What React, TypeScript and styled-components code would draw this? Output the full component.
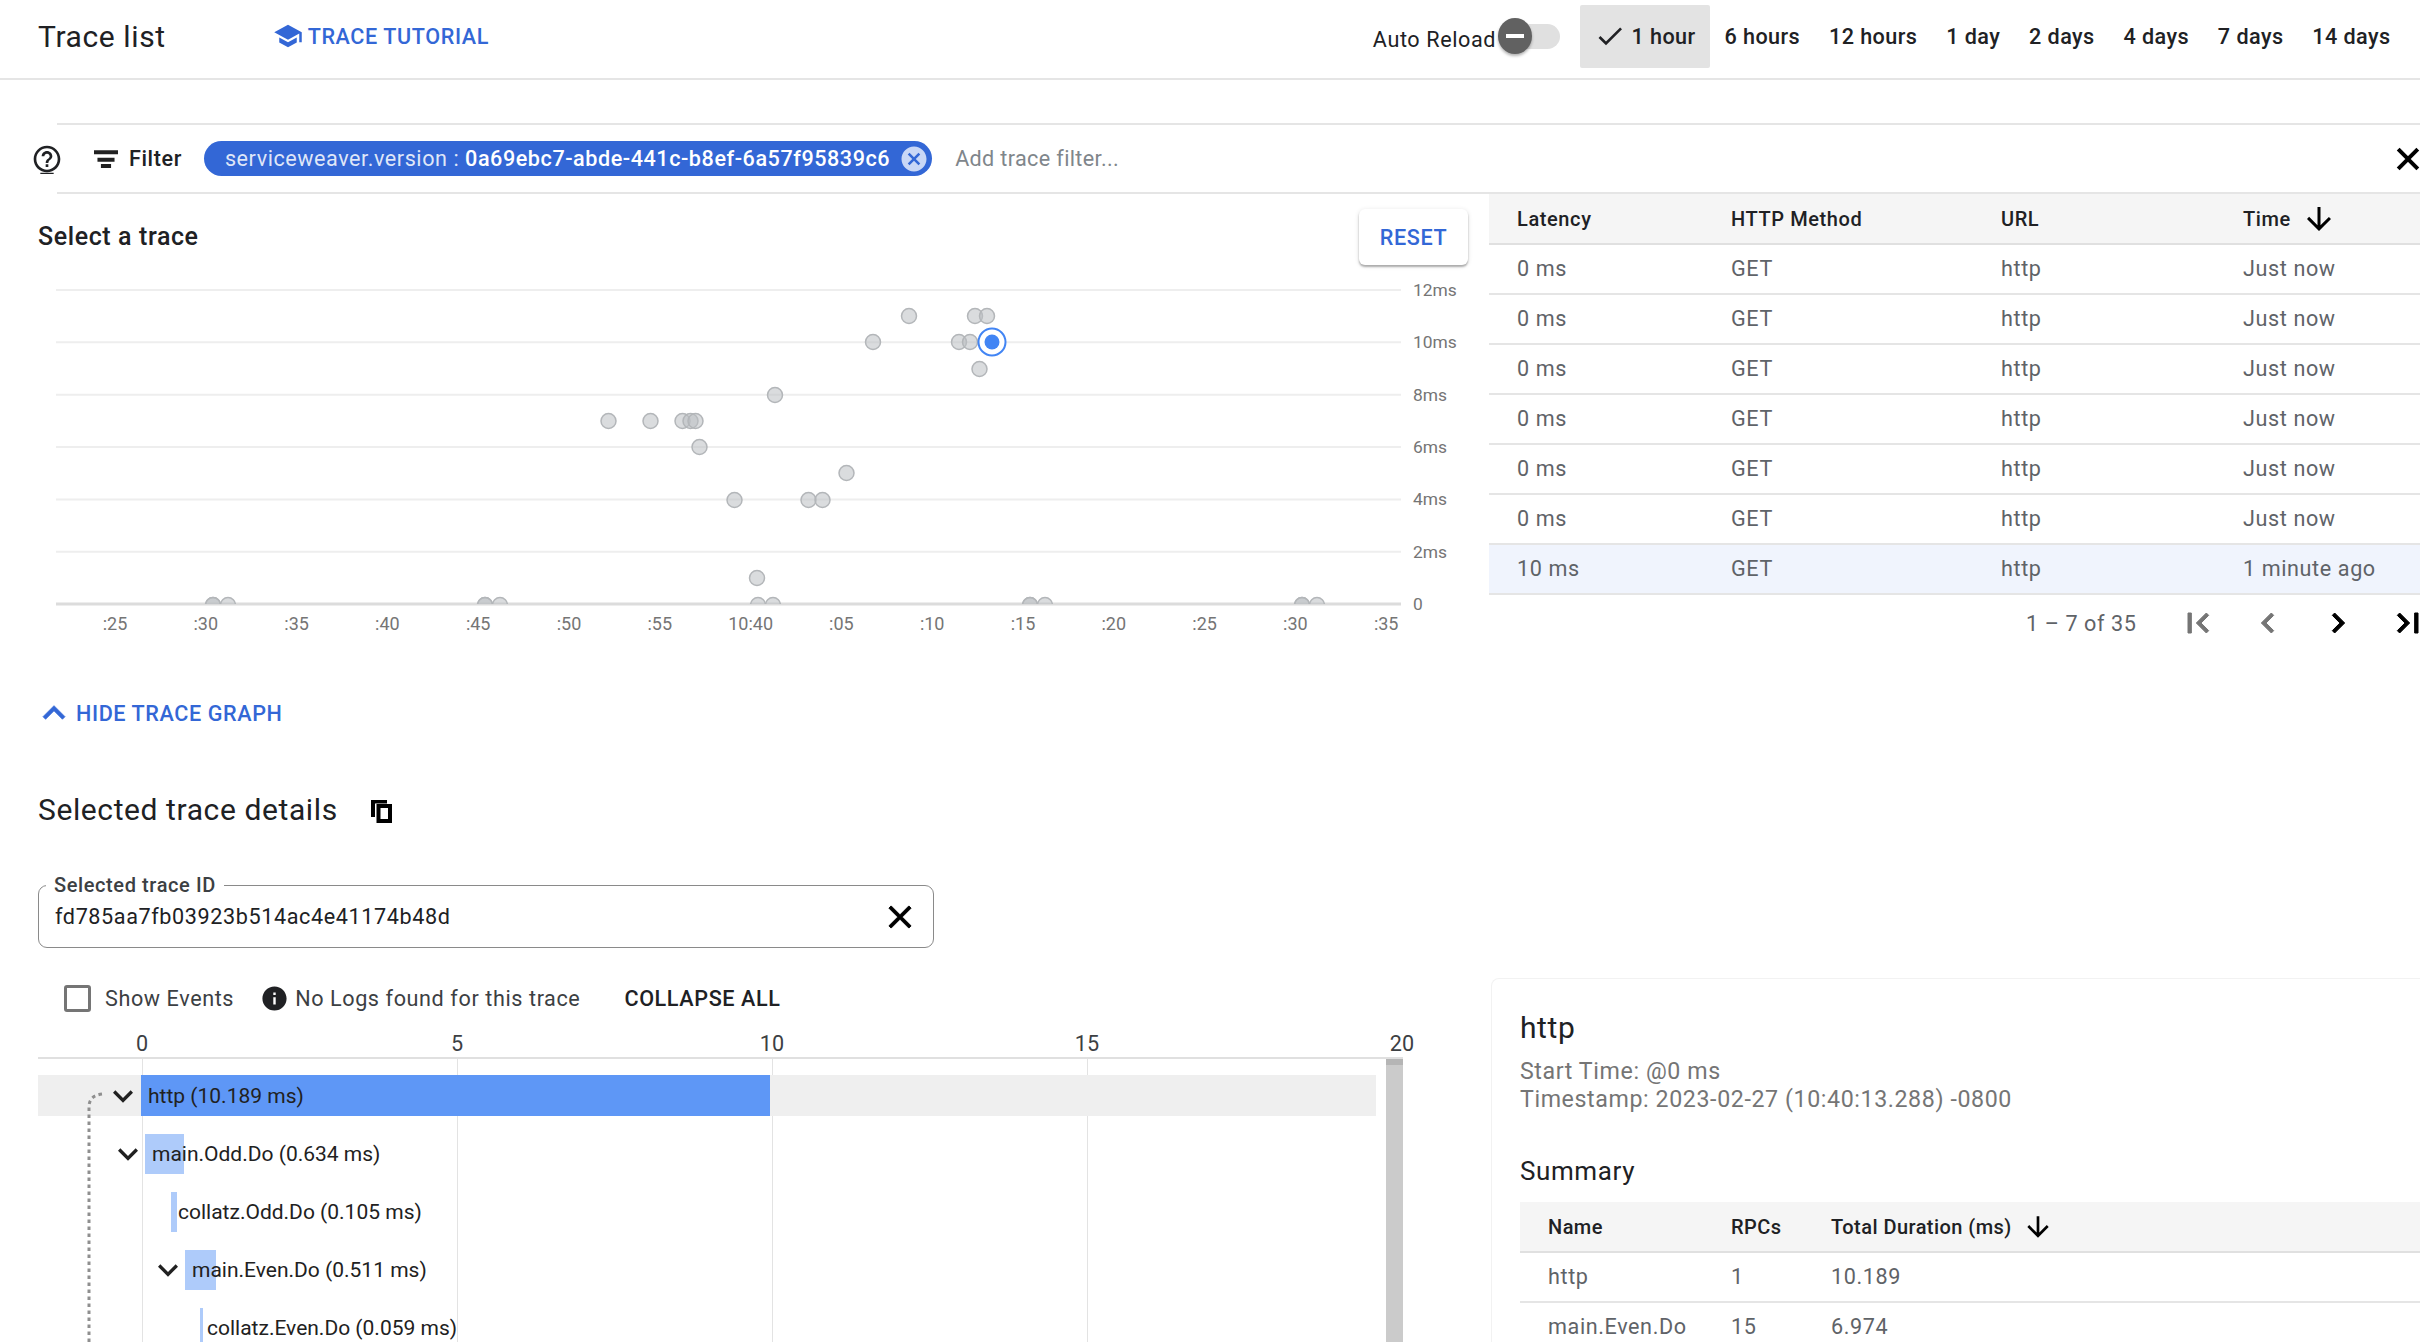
import React from 'react';
import styled, { createGlobalStyle } from 'styled-components';

const BLUE = '#3367d6';

const ICONS: Record<string, string> = {
  school: 'M5 13.18v4L12 21l7-3.82v-4L12 17l-7-3.82zM12 3L1 9l11 6 9-4.91V17h2V9L12 3z',
  help: 'M11 18h2v-2h-2v2zm1-16C6.48 2 2 6.48 2 12s4.48 10 10 10 10-4.48 10-10S17.52 2 12 2zm0 18c-4.41 0-8-3.59-8-8s3.59-8 8-8 8 3.59 8 8-3.59 8-8 8zm0-14c-2.21 0-4 1.79-4 4h2c0-1.1.9-2 2-2s2 .9 2 2c0 2-3 1.75-3 5h2c0-2.25 3-2.5 3-5 0-2.21-1.79-4-4-4zM7 22.3h10v.9H7z',
  filter: 'M3 5.5h18v3H3zM5.6 11h12.8v3H5.6zM8.2 15.7h7.6v3H8.2z',
  close: 'M19 6.41L17.59 5 12 10.59 6.41 5 5 6.41 10.59 12 5 17.59 6.41 19 12 13.41 17.59 19 19 17.59 13.41 12z',
  cancel: 'M12 2C6.47 2 2 6.47 2 12s4.47 10 10 10 10-4.47 10-10S17.53 2 12 2zm5 13.59L15.59 17 12 13.41 8.41 17 7 15.59 10.59 12 7 8.41 8.41 7 12 10.59 15.59 7 17 8.41 13.41 12 17 15.59z',
  check: 'M9 16.17L4.83 12l-1.42 1.41L9 19 21 7l-1.41-1.41z',
  arrowDown: 'M20 12l-1.41-1.41L13 16.17V4h-2v12.17l-5.58-5.59L4 12l8 8 8-8z',
  first: 'M18.41 16.59L13.82 12l4.59-4.59L17 6l-6 6 6 6zM6 6h2v12H6z',
  prev: 'M15.41 7.41L14 6l-6 6 6 6 1.41-1.41L10.83 12z',
  next: 'M10 6L8.59 7.41 13.17 12l-4.58 4.59L10 18l6-6z',
  last: 'M5.59 7.41L10.18 12l-4.59 4.59L7 18l6-6-6-6zM16 6h2v12h-2z',
  less: 'M12 8l-6 6 1.41 1.41L12 10.83l4.59 4.58L18 14z',
  more: 'M16.59 8.59L12 13.17 7.41 8.59 6 10l6 6 6-6z',
  info: 'M12 2C6.48 2 2 6.48 2 12s4.48 10 10 10 10-4.48 10-10S17.52 2 12 2zm1 15h-2v-6h2v6zm0-8h-2V7h2v2z',
};

const Icon: React.FC<{ name: string; size: number; color?: string; bold?: number; className?: string }> = ({
  name,
  size,
  color = 'currentColor',
  bold = 0,
  className,
}) => (
  <svg
    className={className}
    width={size}
    height={size}
    viewBox="0 0 24 24"
    fill={color}
    stroke={bold ? color : 'none'}
    strokeWidth={bold}
    style={{ flexShrink: 0, display: 'block' }}
  >
    <path d={ICONS[name]} />
  </svg>
);

// the copy glyph in the reference is heavier than the material one
const CopyIcon: React.FC = () => (
  <svg width={21} height={23} viewBox="0 0 21 23" fill="#000" fillRule="evenodd" style={{ flexShrink: 0, display: 'block', marginTop: 4 }}>
    <path d="M0 0h16v3.5H4v13.5H0z" />
    <path d="M5.5 4h15.5v19H5.5zM9.5 8v11h7.5V8z" />
  </svg>
);

const GlobalStyle = createGlobalStyle`
  html, body {
    margin: 0;
    padding: 0;
    background: #fff;
    overflow: hidden;
  }
  body {
    font-family: Roboto, "Liberation Sans", sans-serif;
    font-size: 21.6px;
    letter-spacing: 0.6px;
    color: #202124;
  }
  button {
    letter-spacing: inherit;
  }
`;

const Page = styled.div`
  width: 2420px;
  height: 1342px;
  overflow: hidden;
  display: flex;
  flex-direction: column;
`;

/* top bar */
const Header = styled.header`
  height: 80px;
  box-sizing: border-box;
  flex-shrink: 0;
  display: flex;
  align-items: center;
  padding: 0 15px 6px 38px;
  border-bottom: 2px solid #e5e5e5;
`;
const PageTitle = styled.h1`
  margin: 0;
  font-size: 30px;
  font-weight: 400;
  color: #202124;
`;
const TutorialLink = styled.a`
  display: flex;
  align-items: center;
  gap: 5px;
  margin-left: 107px;
  color: ${BLUE};
  font-weight: 500;
`;
const AutoReload = styled.div`
  margin-left: auto;
  display: flex;
  align-items: center;
  padding-top: 6px;
`;
const Track = styled.div`
  position: relative;
  width: 59px;
  height: 25px;
  margin: -6px 20px 0 5px;
  border-radius: 13px;
  background: #e0e0e0;
`;
const Thumb = styled.span`
  position: absolute;
  left: -3px;
  top: -6px;
  width: 34px;
  height: 36px;
  border-radius: 50%;
  background: #616161;
  box-shadow: 0 2px 3px rgba(0, 0, 0, 0.3);
  &::after {
    content: '';
    position: absolute;
    left: 8px;
    right: 8px;
    top: 16px;
    height: 4px;
    background: #fff;
  }
`;
const RangeButton = styled.button<{ $active?: boolean }>`
  height: 63px;
  margin: 0;
  padding: 0 14.4px;
  border: 0;
  display: flex;
  align-items: center;
  gap: 5px;
  background: ${(p) => (p.$active ? '#e3e3e3' : 'transparent')};
  border-radius: 2px;
  font: 500 21.6px Roboto, sans-serif;
  letter-spacing: 0.44px;
  color: #202124;
  white-space: nowrap;
`;

/* filter bar */
const FilterRow = styled.div`
  flex-shrink: 0;
  margin-top: 43px;
  padding-left: 31px;
  display: flex;
  align-items: center;
`;
const HelpIcon = styled(Icon)`
  margin-right: -6px;
  position: relative;
`;
const FilterBar = styled.div`
  flex: 1;
  height: 71px;
  box-sizing: border-box;
  display: flex;
  align-items: center;
  padding-left: 33px;
  border-top: 2px solid #e5e5e5;
  border-bottom: 2px solid #e5e5e5;
`;
const FilterLabel = styled.span`
  margin: 0 22px 0 7px;
  font-weight: 500;
`;
const Chip = styled.div`
  display: flex;
  align-items: center;
  height: 35px;
  padding: 0 3px 0 21px;
  gap: 9px;
  border-radius: 18px;
  background: ${BLUE};
  color: #fff;
  letter-spacing: 0.55px;
  white-space: nowrap;
`;
const ChipKey = styled.span`
  color: rgba(255, 255, 255, 0.85);
`;
const ChipValue = styled.span`
  font-weight: 500;
`;
const Placeholder = styled.span`
  margin-left: 23px;
  letter-spacing: 0.35px;
  color: #80868b;
`;
const BarClose = styled(Icon)`
  margin-left: auto;
  margin-right: -6px;
`;

/* main two columns */
const Body = styled.div`
  flex: 1;
  min-height: 0;
  display: flex;
`;
const LeftColumn = styled.div`
  width: 1489px;
  flex-shrink: 0;
  box-sizing: border-box;
  padding-left: 38px;
`;
const RightColumn = styled.div`
  flex: 1;
  min-width: 0;
`;

const SelectHeader = styled.div`
  height: 76px;
  box-sizing: border-box;
  padding: 15px 21px 0 0;
  display: flex;
  justify-content: space-between;
  align-items: flex-start;
`;
const SectionTitle = styled.h2`
  margin: 0;
  line-height: 56px;
  font-size: 25px;
  font-weight: 500;
`;
const ResetButton = styled.button`
  width: 109px;
  height: 56px;
  padding: 0;
  border: 0;
  border-radius: 6px;
  background: #fff;
  color: ${BLUE};
  font: 500 21.6px Roboto, sans-serif;
  box-shadow: 0 2px 2px rgba(0, 0, 0, 0.28), 0 1px 5px rgba(0, 0, 0, 0.12);
`;
const ChartSvg = styled.svg`
  display: block;
  margin-left: -38px;
  font-family: Roboto, sans-serif;
  font-size: 18px;
  letter-spacing: 0;
`;
const HideLink = styled.a`
  margin: 45px 0 0 -6px;
  height: 36px;
  display: flex;
  align-items: center;
  color: ${BLUE};
  font-weight: 500;
`;
const DetailsHeading = styled.div`
  margin-top: 58px;
  height: 40px;
  display: flex;
  align-items: center;
  gap: 33px;
  font-size: 30px;
`;
const IdField = styled.div`
  position: relative;
  margin-top: 56px;
  width: 896px;
  height: 63px;
  box-sizing: border-box;
  padding: 0 0 0 16px;
  display: flex;
  align-items: center;
  justify-content: space-between;
  border: 1.5px solid #8a8a8a;
  border-radius: 9px;
`;
const IdLabel = styled.label`
  position: absolute;
  left: 7px;
  top: -13px;
  padding: 0 8px;
  line-height: 24px;
  font-size: 20px;
  font-weight: 500;
  background: #fff;
  color: #3c4043;
`;
const IdClose = styled(Icon)`
  margin-right: 14px;
`;
const Controls = styled.div`
  margin-top: 30px;
  height: 40px;
  display: flex;
  align-items: center;
  padding-left: 26px;
  color: #3c4043;
`;
const Checkbox = styled.span`
  width: 27px;
  height: 27px;
  box-sizing: border-box;
  border: 3px solid #757575;
  border-radius: 3px;
`;
const ControlText = styled.span<{ $gap: number }>`
  margin-left: ${(p) => p.$gap}px;
`;
const InfoIcon = styled(Icon)`
  margin-left: 26px;
`;
const CollapseAll = styled.button`
  margin-left: 44px;
  padding: 0;
  border: 0;
  background: none;
  font: 500 21.6px Roboto, sans-serif;
  color: #202124;
`;

/* waterfall */
const Axis = styled.div`
  width: 1365px;
  height: 41px;
  box-sizing: border-box;
  padding: 13px 0 0 104px;
  display: flex;
  border-bottom: 2px solid #e0e0e0;
  color: #3c4043;
  letter-spacing: 0;
`;
const Tick = styled.div`
  width: 315px;
  flex-shrink: 0;
  line-height: 26px;
  span {
    display: inline-block;
    transform: translateX(-50%);
  }
`;
const WaterfallBody = styled.div`
  position: relative;
  width: 1365px;
  height: 290px;
  display: flex;
  gap: 10px;
  overflow: hidden;
`;
const Rows = styled.div`
  width: 1338px;
  padding-top: 16px;
  display: flex;
  flex-direction: column;
  gap: 17px;
  background-image: linear-gradient(to right, #e3e3e3 0, #e3e3e3 1.5px, transparent 1.5px, transparent 315px);
  background-position: 104px 0;
  background-size: 315px 100%;
  background-repeat: repeat-x;
`;
const Row = styled.div<{ $start: number; $selected?: boolean }>`
  height: 41px;
  flex-shrink: 0;
  box-sizing: border-box;
  padding-left: ${(p) => p.$start}px;
  display: flex;
  align-items: center;
  background: ${(p) => (p.$selected ? '#efefef' : 'transparent')};
`;
const Bar = styled.div<{ $width: number; $offset: number; $root?: boolean }>`
  width: ${(p) => p.$width}px;
  height: ${(p) => (p.$root ? 41 : 40)}px;
  margin-left: ${(p) => p.$offset}px;
  flex-shrink: 0;
  display: flex;
  align-items: center;
  background: ${(p) => (p.$root ? '#5e97f6' : '#aecbfa')};
`;
const BarLabel = styled.span`
  margin-left: 7px;
  white-space: nowrap;
  font-size: 21px;
  letter-spacing: 0;
  color: #212121;
`;
const Scrollbar = styled.div`
  width: 17px;
  flex-shrink: 0;
  background: linear-gradient(#b5b5b5 0 6px, #cbcbcb 6px);
`;
const Connector = styled.svg`
  position: absolute;
  left: 40px;
  top: 0;
`;

/* trace table */
const Table = styled.table`
  width: 931px;
  table-layout: fixed;
  border-collapse: collapse;
`;
const HeadCell = styled.th<{ $width?: number }>`
  ${(p) => (p.$width ? `width: ${p.$width}px;` : '')}
  height: 50px;
  box-sizing: border-box;
  padding: 0 0 0 28px;
  text-align: left;
  font-size: 20px;
  font-weight: 500;
  color: #202124;
  background: #f5f5f5;
  border-bottom: 2px solid #e0e0e0;
`;
const HeadInner = styled.span`
  display: flex;
  align-items: center;
  gap: 10px;
`;
const BodyRow = styled.tr<{ $selected?: boolean }>`
  background: ${(p) => (p.$selected ? '#f0f4fd' : 'transparent')};
`;
const Cell = styled.td`
  height: 50px;
  box-sizing: border-box;
  padding: 0 0 2px 28px;
  color: #5f6368;
  white-space: nowrap;
  border-bottom: 2px solid #e5e5e5;
`;
const Pagination = styled.div`
  height: 56px;
  padding-left: 537px;
  display: flex;
  align-items: center;
  color: #5f6368;
`;
const PageRange = styled.span`
  width: 137px;
  flex-shrink: 0;
  white-space: nowrap;
`;
const PageButton = styled.span<{ $dim?: boolean }>`
  width: 70px;
  flex-shrink: 0;
  display: flex;
  justify-content: center;
  color: ${(p) => (p.$dim ? '#757575' : '#000')};
`;

/* span details panel */
const DetailPanel = styled.section`
  margin: 327px 0 0 2px;
  height: 400px;
  box-sizing: border-box;
  padding: 27px 0 0 28px;
  border-left: 1.5px solid #f2f2f2;
  border-top: 1.5px solid #f2f2f2;
  border-top-left-radius: 8px;
`;
const SpanTitle = styled.h2`
  margin: 0;
  font-size: 30px;
  line-height: 44px;
  font-weight: 400;
`;
const SpanMeta = styled.div`
  margin-top: 7px;
  font-size: 23.2px;
  line-height: 28px;
  color: #757575;
`;
const SummaryTitle = styled.h3`
  margin: 40px 0 0;
  font-size: 26px;
  line-height: 36px;
  font-weight: 400;
`;
const SummaryTable = styled(Table)`
  margin-top: 13px;
  width: 901px;
  th {
    letter-spacing: 0.45px;
  }
`;

const gridY = (i: number) => 20 + i * 52.35;
const yLabels = ['12ms', '10ms', '8ms', '6ms', '4ms', '2ms', '0'];
const xLabels = [':25', ':30', ':35', ':40', ':45', ':50', ':55', '10:40', ':05', ':10', ':15', ':20', ':25', ':30', ':35'];
// x, y in chart space
const dots: [number, number][] = [
  [909, 46], [975, 46], [987, 46], [873, 72], [959, 72], [970, 72], [979.5, 99], [775, 125],
  [608.5, 151], [650.5, 151], [682.5, 151], [690.5, 151], [695.5, 151], [699.5, 177], [846.5, 203], [734.5, 230],
  [808.5, 230], [822.5, 230], [757, 308],
];
const axisDots = [213, 213, 228, 485, 485, 500, 758, 773, 1030, 1030, 1045, 1302, 1302, 1317];

const ScatterChart: React.FC = () => (
  <ChartSvg width={1489} height={380} viewBox="0 0 1489 380">
    <defs>
      <clipPath id="plot">
        <rect x="0" y="0" width="1489" height="334" />
      </clipPath>
    </defs>
    {yLabels.map((label, i) => (
      <g key={label}>
        <line
          x1={56}
          x2={1401}
          y1={gridY(i)}
          y2={gridY(i)}
          stroke={i === 6 ? '#dcdcdc' : '#eeeeee'}
          strokeWidth={i === 6 ? 3 : 2}
        />
        <text x={1413} y={gridY(i) + 6} fill="#757575" fontSize={17.4}>
          {label}
        </text>
      </g>
    ))}
    {xLabels.map((label, i) => (
      <text key={i} x={115 + i * 90.8} y={360} fill="#757575" textAnchor="middle">
        {label}
      </text>
    ))}
    <g clipPath="url(#plot)">
      {axisDots.map((x, i) => (
        <circle key={i} cx={x} cy={335} r={7.5} fill="rgba(188,191,195,0.55)" stroke="#b3b6b9" strokeWidth={1.5} />
      ))}
    </g>
    {dots.map(([x, y], i) => (
      <circle key={i} cx={x} cy={y} r={7.5} fill="rgba(188,191,195,0.55)" stroke="#b3b6b9" strokeWidth={1.5} />
    ))}
    <circle cx={992} cy={72} r={13.5} fill="#fff" stroke="#4285f4" strokeWidth={2} />
    <circle cx={992} cy={72} r={7.5} fill="#4285f4" />
  </ChartSvg>
);

const ranges = ['6 hours', '12 hours', '1 day', '2 days', '4 days', '7 days', '14 days'];
const traces = [
  ['0 ms', 'Just now'],
  ['0 ms', 'Just now'],
  ['0 ms', 'Just now'],
  ['0 ms', 'Just now'],
  ['0 ms', 'Just now'],
  ['0 ms', 'Just now'],
  ['10 ms', '1 minute ago'],
];
const spans = [
  { label: 'http (10.189 ms)', start: 65, offset: -2, width: 629, chevron: true, root: true },
  { label: 'main.Odd.Do (0.634 ms)', start: 70, offset: -3, width: 39, chevron: true },
  { label: 'collatz.Odd.Do (0.105 ms)', start: 133, offset: 0, width: 6 },
  { label: 'main.Even.Do (0.511 ms)', start: 110, offset: -3, width: 31, chevron: true },
  { label: 'collatz.Even.Do (0.059 ms)', start: 162, offset: 0, width: 3 },
];

const App: React.FC = () => (
  <Page>
    <GlobalStyle />
    <Header>
      <PageTitle>Trace list</PageTitle>
      <TutorialLink>
        <Icon name="school" size={30} />
        TRACE TUTORIAL
      </TutorialLink>
      <AutoReload>
        Auto Reload
        <Track>
          <Thumb />
        </Track>
      </AutoReload>
      <RangeButton $active>
        <Icon name="check" size={32} />1 hour
      </RangeButton>
      {ranges.map((r) => (
        <RangeButton key={r}>{r}</RangeButton>
      ))}
    </Header>

    <FilterRow>
      <HelpIcon name="help" size={32} color="#202124" />
      <FilterBar>
        <Icon name="filter" size={32} color="#212121" />
        <FilterLabel>Filter</FilterLabel>
        <Chip>
          <span>
            <ChipKey>serviceweaver.version : </ChipKey>
            <ChipValue>0a69ebc7-abde-441c-b8ef-6a57f95839c6</ChipValue>
          </span>
          <Icon name="cancel" size={30} color="#c9d7f6" />
        </Chip>
        <Placeholder>Add trace filter...</Placeholder>
        <BarClose name="close" size={36} color="#000" bold={0.7} />
      </FilterBar>
    </FilterRow>

    <Body>
      <LeftColumn>
        <SelectHeader>
          <SectionTitle>Select a trace</SectionTitle>
          <ResetButton>RESET</ResetButton>
        </SelectHeader>
        <ScatterChart />
        <HideLink>
          <Icon name="less" size={44} bold={0.4} />
          HIDE TRACE GRAPH
        </HideLink>
        <DetailsHeading>
          Selected trace details
          <CopyIcon />
        </DetailsHeading>
        <IdField>
          <IdLabel>Selected trace ID</IdLabel>
          fd785aa7fb03923b514ac4e41174b48d
          <IdClose name="close" size={38} color="#000" bold={0.6} />
        </IdField>
        <Controls>
          <Checkbox />
          <ControlText $gap={14}>Show Events</ControlText>
          <InfoIcon name="info" size={29} color="#202124" />
          <ControlText $gap={6}>No Logs found for this trace</ControlText>
          <CollapseAll>COLLAPSE ALL</CollapseAll>
        </Controls>
        <Axis>
          {['0', '5', '10', '15', '20'].map((t) => (
            <Tick key={t}>
              <span>{t}</span>
            </Tick>
          ))}
        </Axis>
        <WaterfallBody>
          <Rows>
            {spans.map((s) => (
              <Row key={s.label} $start={s.start} $selected={s.root}>
                {s.chevron && <Icon name="more" size={40} color="#212121" />}
                <Bar $width={s.width} $offset={s.offset} $root={s.root}>
                  <BarLabel>{s.label}</BarLabel>
                </Bar>
              </Row>
            ))}
          </Rows>
          <Scrollbar />
          <Connector width="30" height="290" viewBox="0 0 30 290">
            <path d="M24 35 C16 36 11 40 11 48 L11 290" fill="none" stroke="#8f8f8f" strokeWidth="3" strokeDasharray="3.5 3.5" />
          </Connector>
        </WaterfallBody>
      </LeftColumn>

      <RightColumn>
        <Table>
          <thead>
            <tr>
              <HeadCell $width={214}>Latency</HeadCell>
              <HeadCell $width={270}>HTTP Method</HeadCell>
              <HeadCell $width={242}>URL</HeadCell>
              <HeadCell>
                <HeadInner>
                  Time
                  <Icon name="arrowDown" size={36} color="#000" />
                </HeadInner>
              </HeadCell>
            </tr>
          </thead>
          <tbody>
            {traces.map(([latency, time], i) => (
              <BodyRow key={i} $selected={i === 6}>
                <Cell>{latency}</Cell>
                <Cell>GET</Cell>
                <Cell>http</Cell>
                <Cell>{time}</Cell>
              </BodyRow>
            ))}
          </tbody>
        </Table>
        <Pagination>
          <PageRange>1 – 7 of 35</PageRange>
          <PageButton $dim>
            <Icon name="first" size={40} bold={0.6} />
          </PageButton>
          <PageButton $dim>
            <Icon name="prev" size={40} bold={0.6} />
          </PageButton>
          <PageButton>
            <Icon name="next" size={40} bold={0.6} />
          </PageButton>
          <PageButton>
            <Icon name="last" size={40} bold={0.6} />
          </PageButton>
        </Pagination>
        <DetailPanel>
          <SpanTitle>http</SpanTitle>
          <SpanMeta>
            Start Time: @0 ms
            <br />
            Timestamp: 2023-02-27 (10:40:13.288) -0800
          </SpanMeta>
          <SummaryTitle>Summary</SummaryTitle>
          <SummaryTable>
            <thead>
              <tr>
                <HeadCell $width={183}>Name</HeadCell>
                <HeadCell $width={100}>RPCs</HeadCell>
                <HeadCell>
                  <HeadInner>
                    Total Duration (ms)
                    <Icon name="arrowDown" size={32} color="#000" />
                  </HeadInner>
                </HeadCell>
              </tr>
            </thead>
            <tbody>
              <tr>
                <Cell>http</Cell>
                <Cell>1</Cell>
                <Cell>10.189</Cell>
              </tr>
              <tr>
                <Cell>main.Even.Do</Cell>
                <Cell>15</Cell>
                <Cell>6.974</Cell>
              </tr>
            </tbody>
          </SummaryTable>
        </DetailPanel>
      </RightColumn>
    </Body>
  </Page>
);

export default App;
